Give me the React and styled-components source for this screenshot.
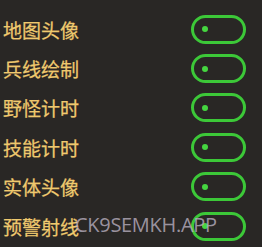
import React from "react";
import styled, { createGlobalStyle } from "styled-components";

const Global = createGlobalStyle`
  html, body { margin: 0; padding: 0; background: #292725; }
  body { font-family: "Noto Sans CJK SC", "Noto Sans", sans-serif; }
`;

const Page = styled.div`
  position: relative;
  width: 262px;
  height: 247px;
  background: #292725;
  box-sizing: border-box;
  padding: 9.5px 16px 0 3px;
  display: flex;
  flex-direction: column;
  overflow: hidden;
`;

const Row = styled.div`
  height: 39.4px;
  display: flex;
  align-items: center;
  justify-content: space-between;
`;

const Label = styled.span`
  color: #efc96e;
  font-size: 19px;
  font-weight: 400;
  line-height: 1;
  -webkit-text-stroke: 0.25px #efc96e;
`;

const Toggle = styled.div`
  width: 55px;
  height: 29px;
  box-sizing: border-box;
  border: 3px solid #3cc838;
  border-radius: 15px;
  display: flex;
  align-items: center;
  padding-left: 8px;
`;

const Dot = styled.span`
  width: 6px;
  height: 6px;
  border-radius: 50%;
  background: #45d640;
`;

const Watermark = styled.div`
  position: absolute;
  left: 75px;
  top: 210.5px;
  font-family: "Open Sans", "Liberation Sans", sans-serif;
  font-size: 20px;
  letter-spacing: -0.3px;
  color: rgba(185, 176, 192, 0.8);
  pointer-events: none;
`;

const items = ["地图头像", "兵线绘制", "野怪计时", "技能计时", "实体头像", "预警射线"];

export default function App() {
  return (
    <>
      <Global />
      <Page>
        {items.map((t) => (
          <Row key={t}>
            <Label>{t}</Label>
            <Toggle>
              <Dot />
            </Toggle>
          </Row>
        ))}
        <Watermark>CK9SEMKH.APP</Watermark>
      </Page>
    </>
  );
}
